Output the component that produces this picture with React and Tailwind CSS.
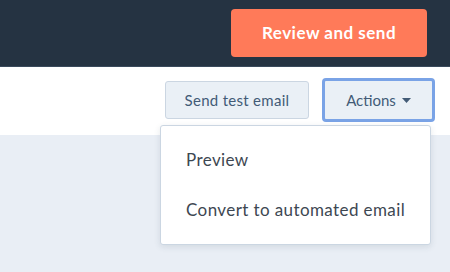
import React from 'react';

const App = () => {
  return (
    <div className="w-[450px] h-[272px] overflow-hidden bg-[#e9eef5] font-['Lato','Open_Sans',sans-serif]">
      {/* Top bar */}
      <div className="h-[67px] bg-[#253342] border-b border-[#3a4a5c] flex justify-end items-start pt-[9px] pr-[23px]">
        <button className="w-[196px] h-[48px] rounded-[4px] bg-[#ff7a59] text-white text-[17px] font-bold tracking-[0.5px]">
          Review and send
        </button>
      </div>

      {/* Toolbar */}
      <div className="relative h-[68px] bg-white flex justify-end items-start pt-[11px] pr-[15px] gap-[13px]">
        <button className="mt-[3px] w-[144px] h-[38px] rounded-[3px] bg-[#eaf0f6] border border-[#cbd6e2] text-[#425b76] text-[15px] tracking-[0.3px]">
          Send test email
        </button>
        <button className="w-[113px] h-[44px] rounded-[4px] bg-[#eaf0f6] border-[3px] border-[#7aa3e6] text-[#425b76] text-[15px] flex items-center justify-center gap-[6px]">
          Actions
          <svg width="9" height="5" viewBox="0 0 9 5">
            <path d="M0 0h9L4.5 5z" fill="#425b76" />
          </svg>
        </button>

        {/* Dropdown menu */}
        <div className="absolute left-[160px] top-[58px] w-[271px] h-[120px] bg-white border border-[#cbd6e2] rounded-[3px] shadow-[0_2px_6px_rgba(45,62,80,0.12)] flex flex-col pt-[22px] pl-[25px] gap-[26px] text-[17px] tracking-[0.4px] text-[#3d4752] whitespace-nowrap">
          <div className="leading-[24px]">Preview</div>
          <div className="leading-[24px]">Convert to automated email</div>
        </div>
      </div>
    </div>
  );
};

export default App;
